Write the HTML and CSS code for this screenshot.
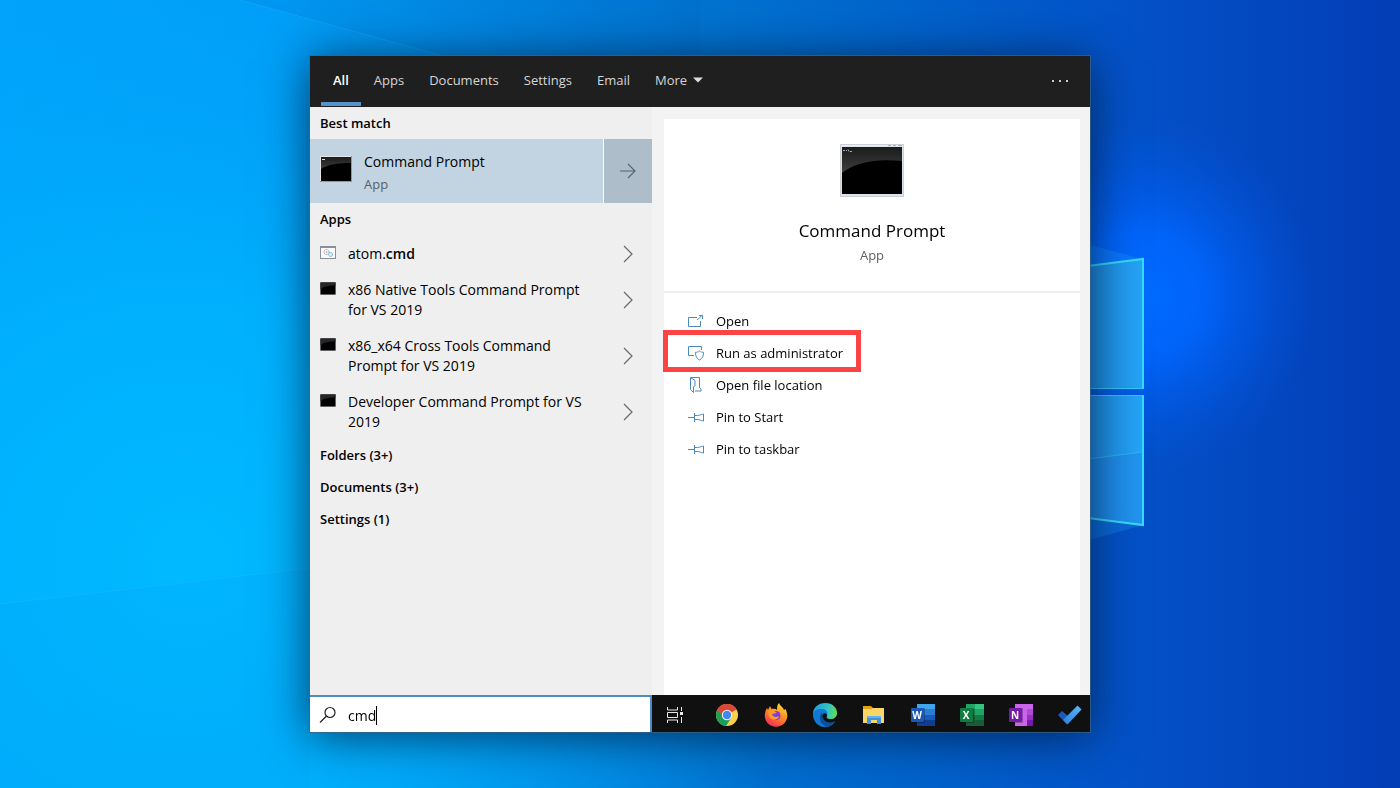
FILE: index.html
```
<!DOCTYPE html>
<html lang="en">
<head>
    <meta charset="UTF-8">
    <meta name="viewport" content="width=device-width, initial-scale=1.0">
    <title>Search</title>
    <link rel="stylesheet" href="styles.css">
</head>
<body>
    <!-- wallpaper -->
    <svg class="wallpaper" viewBox="0 0 1400 788" preserveAspectRatio="xMidYMid slice" aria-hidden="true">
        <defs>
            <linearGradient id="sky" x1="0" y1="0" x2="1" y2="0">
                <stop offset="0" stop-color="#00a4fb"/>
                <stop offset=".2" stop-color="#009df8"/>
                <stop offset=".5" stop-color="#0074d0"/>
                <stop offset=".8" stop-color="#0352c8"/>
                <stop offset="1" stop-color="#033db6"/>
            </linearGradient>
            <radialGradient id="cyan" gradientUnits="userSpaceOnUse" cx="190" cy="560" r="620">
                <stop offset="0" stop-color="#00baff"/>
                <stop offset=".4" stop-color="#00b4ff" stop-opacity=".85"/>
                <stop offset="1" stop-color="#00a4f8" stop-opacity="0"/>
            </radialGradient>
            <radialGradient id="glow" gradientUnits="userSpaceOnUse" cx="1140" cy="295" r="180">
                <stop offset="0" stop-color="#006cff"/>
                <stop offset=".35" stop-color="#0066ff" stop-opacity=".9"/>
                <stop offset="1" stop-color="#0054e0" stop-opacity="0"/>
            </radialGradient>
            <linearGradient id="pane" x1="0" y1="0" x2="1" y2="0">
                <stop offset="0" stop-color="#1c86dc"/>
                <stop offset="1" stop-color="#25a5f8"/>
            </linearGradient>
        </defs>
        <rect width="1400" height="788" fill="url(#sky)"/>
        <rect width="1400" height="788" fill="url(#cyan)"/>
        <rect width="1400" height="788" fill="url(#glow)"/>
        <path d="M240 0L440 55H700V0z" fill="#0060c0" opacity=".12"/>
        <path d="M0 604L310 568V788H0z" fill="#0090e8" opacity=".1"/>
        <path d="M240 0L440 55M0 604L310 568" stroke="#3cc0ff" stroke-opacity=".25" fill="none"/>
        <path d="M1090 245L1143 259L1090 266zM1090 519L1143 525L1090 540z" fill="#20a8ff" opacity=".25"/>
        <path d="M1080 267L1143 259V389H1080z" fill="url(#pane)"/>
        <path d="M1080 395H1143V525L1080 517z" fill="url(#pane)"/>
        <path d="M1080 460L1143 452V525L1080 517z" fill="#1a74e0" opacity=".3"/>
        <path d="M1080 460L1143 452" stroke="#30c8f0" stroke-opacity=".6"/>
        <path d="M1080 267L1143 259V389M1143 395V525L1080 517" fill="none" stroke="#34dcf8" stroke-width="2"/>
        <path d="M1080 388.500H1143M1080 395.500H1143" stroke="#30c8f5"/>
    </svg>

    <!-- shared icon shapes -->
    <svg class="sprite" aria-hidden="true">
        <defs>
            <linearGradient id="shine" x1="0" y1="0" x2="0" y2="1">
                <stop offset="0" stop-color="#1c1c1c"/>
                <stop offset="1" stop-color="#3e3e3e"/>
            </linearGradient>
            <symbol id="console" viewBox="0 0 16 13">
                <rect width="16" height="13" fill="#c3c7cc"/>
                <rect x=".5" y=".5" width="15" height="12" fill="#000"/>
                <path d="M.5 7.500C3 4.500 8 3.500 15.500 3.500V.5H.5z" fill="#262626"/>
            </symbol>
            <symbol id="chevron" viewBox="0 0 10 18">
                <path d="M1 1l8 8-8 8" fill="none" stroke="#6a6a6a" stroke-width="1.200"/>
            </symbol>
            <symbol id="pin" viewBox="0 0 16 16">
                <path d="M0 8.500h6.500M6.500 4v9M6.500 6.500h3c2 0 3-1 6-1.500v7c-3-.5-4-1.500-6-1.500h-3" fill="none" stroke="#4a8ac4"/>
            </symbol>
        </defs>
    </svg>

    <div class="window">
        <header class="tabs">
            <nav class="tab-list">
                <button class="tab active">All</button>
                <button class="tab">Apps</button>
                <button class="tab">Documents</button>
                <button class="tab">Settings</button>
                <button class="tab">Email</button>
                <button class="tab">More <svg width="10" height="6" viewBox="0 0 10 6"><path d="M0 .5h10L5 5.500z" fill="#ddd"/></svg></button>
            </nav>
            <button class="options" aria-label="Options">
                <svg width="16" height="4" viewBox="0 0 16 4" fill="#ccc"><rect x="0" y="0" width="2" height="2"/><rect x="7" y="0" width="2" height="2"/><rect x="14" y="0" width="2" height="2"/></svg>
            </button>
        </header>

        <main class="content">
            <section class="results">
                <h2 class="group">Best match</h2>
                <div class="best">
                    <button class="best-item">
                        <svg class="best-icon" width="32" height="26" viewBox="0 0 32 26">
                            <rect width="32" height="26" fill="#8f979f"/>
                            <rect width="31" height="25" fill="#e3e7ea"/>
                            <rect x="1" y="1" width="30" height="24" fill="#000"/>
                            <path d="M1 13C7 9 16 7 31 7V1H1z" fill="url(#shine)"/>
                            <path d="M2 3.500h3" stroke="#ddd"/>
                        </svg>
                        <span class="best-text">
                            <span class="best-name">Command Prompt</span>
                            <span class="kind">App</span>
                        </span>
                    </button>
                    <button class="best-open" aria-label="Show details">
                        <svg width="16" height="16" viewBox="0 0 16 16"><path d="M0 8h15M8 1l7 7-7 7" fill="none" stroke="#57636e" stroke-width="1.100"/></svg>
                    </button>
                </div>

                <h2 class="group">Apps</h2>
                <button class="result">
                    <svg class="result-icon" width="16" height="13" viewBox="0 0 16 13">
                        <rect x=".5" y=".5" width="15" height="12" fill="#fafafa" stroke="#8b9098"/>
                        <path d="M1 1.500h14" stroke="#8b9098"/>
                        <circle cx="6.500" cy="6" r="2.500" fill="none" stroke="#8f9499" stroke-dasharray="1.200 .6"/>
                        <circle cx="6.500" cy="6" r=".8" fill="#8f9499"/>
                        <circle cx="10.500" cy="8.500" r="2" fill="#d5edf8" stroke="#6bafd4" stroke-dasharray="1.200 .5"/>
                    </svg>
                    <span class="result-name">atom.<b>cmd</b></span>
                    <svg class="result-more" width="10" height="18"><use href="#chevron"/></svg>
                </button>
                <button class="result">
                    <svg class="result-icon" width="16" height="13"><use href="#console"/></svg>
                    <span class="result-name">x86 Native Tools Command Prompt for VS 2019</span>
                    <svg class="result-more" width="10" height="18"><use href="#chevron"/></svg>
                </button>
                <button class="result">
                    <svg class="result-icon" width="16" height="13"><use href="#console"/></svg>
                    <span class="result-name">x86_x64 Cross Tools Command Prompt for VS 2019</span>
                    <svg class="result-more" width="10" height="18"><use href="#chevron"/></svg>
                </button>
                <button class="result">
                    <svg class="result-icon" width="16" height="13"><use href="#console"/></svg>
                    <span class="result-name">Developer Command Prompt for VS 2019</span>
                    <svg class="result-more" width="10" height="18"><use href="#chevron"/></svg>
                </button>

                <h2 class="group">Folders (3+)</h2>
                <h2 class="group">Documents (3+)</h2>
                <h2 class="group">Settings (1)</h2>
            </section>

            <section class="preview">
                <div class="card">
                    <div class="card-head">
                        <svg width="64" height="54" viewBox="0 0 64 54">
                            <rect x=".5" y=".5" width="63" height="52" fill="#dde3ea" stroke="#ccd0d4"/>
                            <path d="M1 1.500h62" stroke="#eef1f4"/>
                            <path d="M48 1.500h3M53 1.500h3M58 1.500h4" stroke="#a9b2bd"/>
                            <rect x="2" y="3" width="60" height="47" fill="#000"/>
                            <path d="M2 29C14 19 34 14 62 17V3H2z" fill="url(#shine)"/>
                            <path d="M3 6.500h2M6 6.500h1M8 5.500l1 2M10 7.500h2" stroke="#aaa"/>
                        </svg>
                        <h1 class="card-title">Command Prompt</h1>
                        <span class="kind">App</span>
                    </div>
                    <div class="actions">
                        <button class="action">
                            <svg width="16" height="16" viewBox="0 0 16 16" fill="none" stroke="#4a8ac4"><path d="M9 4.500H.5v9h12V8M9 7l5.500-5M11 2.500h3.500V6"/></svg>
                            Open
                        </button>
                        <button class="action marked">
                            <svg width="16" height="16" viewBox="0 0 16 16" fill="none" stroke="#4a8ac4"><path d="M6 10.500H.5v-9h13V5M11.500 6c1.200 1 2.600 1.300 4 1.300 0 4-1 6.200-4 7.700-3-1.500-4-3.700-4-7.700 1.400 0 2.800-.3 4-1.300z"/></svg>
                            Run as administrator
                        </button>
                        <button class="action">
                            <svg width="16" height="16" viewBox="0 0 16 16" fill="none" stroke="#4a8ac4"><path d="M2.500.5v12l3 3V10L7 8.500V3.500l-4.500-3h9v10l1.500 1.500v2H7"/></svg>
                            Open file location
                        </button>
                        <button class="action">
                            <svg width="16" height="16"><use href="#pin"/></svg>
                            Pin to Start
                        </button>
                        <button class="action">
                            <svg width="16" height="16"><use href="#pin"/></svg>
                            Pin to taskbar
                        </button>
                    </div>
                </div>
            </section>
        </main>

        <footer class="bottom">
            <label class="search">
                <svg width="18" height="18" viewBox="0 0 18 18" fill="none" stroke="#222" stroke-width="1.200"><circle cx="11" cy="6.500" r="5"/><path d="M7.500 10L1 16.500"/></svg>
                <input class="search-input" type="text" value="cmd" aria-label="Search">
                <span class="caret"></span>
            </label>
            <div class="taskbar">
                <button class="task task-view" aria-label="Task View">
                    <svg width="24" height="24" viewBox="0 0 24 24" fill="none" stroke="#e8e8e8"><path d="M4.500 4v3h10V4M4.500 20v-3h10v3M4.500 9.500h10v5h-10zM18.500 4v4M18.500 14v6"/><rect x="17.500" y="9.500" width="2" height="2" fill="#fff"/></svg>
                </button>
                <button class="task" aria-label="Chrome">
                    <svg width="24" height="24" viewBox="0 0 24 24">
                        <circle cx="12" cy="12" r="11" fill="#fcd04b"/>
                        <path d="M12 12L2.500 6.500A11 11 0 0 1 21.500 6.500z" fill="#d9483b"/>
                        <path d="M2.500 6.500A11 11 0 0 0 11 23l5.500-8.500H12z" fill="#1b9e58"/>
                        <path d="M12 7h9.700A11 11 0 0 0 2.500 6.500L8 14z" fill="#d9483b"/>
                        <circle cx="12" cy="12" r="5.200" fill="#f4f4f4"/>
                        <circle cx="12" cy="12" r="4.200" fill="#4486f4"/>
                    </svg>
                </button>
                <button class="task" aria-label="Firefox">
                    <svg width="24" height="24" viewBox="0 0 24 24">
                        <defs><linearGradient id="fire" x1=".8" y1="0" x2=".3" y2="1"><stop offset="0" stop-color="#ffe03a"/><stop offset=".5" stop-color="#ff8a1e"/><stop offset="1" stop-color="#f5295c"/></linearGradient></defs>
                        <path d="M15 0c1 3 4 4 5 7l1.500-1C24 11 24 16 20.500 20 16 25 8 25 3.500 20 0 16 0 10 3 5l1 2 2-4 1.500 3C10 5.500 12 6 13 7c0-3 0-5 2-7z" fill="url(#fire)"/>
                        <circle cx="12" cy="12.500" r="4.500" fill="#7a3fe0"/>
                        <path d="M4 8c3-1 6-1 9 2-2 0-3 1-5 1 1 3 4 4 7 2-1 5-8 5-10 0z" fill="#ff9a22"/>
                    </svg>
                </button>
                <button class="task" aria-label="Edge">
                    <svg width="24" height="24" viewBox="0 0 24 24">
                        <defs><linearGradient id="edge" x1="0" y1=".4" x2="1" y2=".5"><stop offset="0" stop-color="#1f9be0"/><stop offset=".6" stop-color="#30c3c8"/><stop offset="1" stop-color="#62dc50"/></linearGradient></defs>
                        <path d="M0 11C0 4 6 0 12 0c8 0 12 5 12 10 0 4-3 6-6 6-4 0-5-1-4-3 1-3-2-5-5-5C4 8 1 10 0 13z" fill="url(#edge)"/>
                        <path d="M0 12c0-4 4-6 8-6 5 0 7 3 6 6-1-2-3-2-4-1-3 4 1 9 6 9 3 0 5-1 6-2-2 4-6 6-10 6C5 24 0 18 0 12z" fill="#1279d0"/>
                        <path d="M9 9c-4 5-2 13 5 15 4-.5 7-3 8-6-6 4-14 0-13-9z" fill="#0c4f9e"/>
                    </svg>
                </button>
                <button class="task" aria-label="File Explorer">
                    <svg width="24" height="24" viewBox="0 0 24 24">
                        <path d="M1 3h8l2 2v4H1z" fill="#e3a010"/>
                        <path d="M1 6h8l2-1h11v15H1z" fill="#fbd568"/>
                        <path d="M5 21v-8h14v8h-4v-4H9v4z" fill="#3f94dc"/>
                        <path d="M5 13h14v2H5z" fill="#62b4ee"/>
                    </svg>
                </button>
                <button class="task" aria-label="Word">
                    <svg width="26" height="24" viewBox="0 0 26 24">
                        <path d="M7 1h18v6H7z" fill="#41a5ee"/><path d="M7 6h18v6H7z" fill="#2b7cd3"/><path d="M7 12h18v5H7z" fill="#185abd"/><path d="M7 17h18v6H7z" fill="#103f91"/>
                        <path d="M7 5h8v15H7z" fill="#000" opacity=".25"/>
                        <rect x="1" y="5" width="13" height="14" rx="1" fill="#1a58b8"/>
                        <text class="letter" x="7" y="16">W</text>
                    </svg>
                </button>
                <button class="task" aria-label="Excel">
                    <svg width="26" height="24" viewBox="0 0 26 24">
                        <path d="M7 1h9v6H7z" fill="#21a366"/><path d="M16 1h9v6h-9z" fill="#33c481"/><path d="M7 6h9v6H7z" fill="#107c41"/><path d="M16 6h9v6h-9z" fill="#21a366"/><path d="M7 12h9v5H7z" fill="#185c37"/><path d="M16 12h9v5h-9z" fill="#107c41"/><path d="M7 17h18v6H7z" fill="#185c37"/>
                        <path d="M7 5h8v15H7z" fill="#000" opacity=".25"/>
                        <rect x="1" y="5" width="13" height="14" rx="1" fill="#107c41"/>
                        <text class="letter" x="7" y="16">X</text>
                    </svg>
                </button>
                <button class="task" aria-label="OneNote">
                    <svg width="26" height="24" viewBox="0 0 26 24">
                        <path d="M7 1h18v22H7z" fill="#ca64ea"/><path d="M19 6h6v6h-6z" fill="#ae4bd5"/><path d="M19 12h6v5h-6z" fill="#9332bf"/><path d="M19 17h6v6h-6z" fill="#7719aa"/>
                        <path d="M7 5h8v15H7z" fill="#000" opacity=".25"/>
                        <rect x="1" y="5" width="13" height="14" rx="1" fill="#7719aa"/>
                        <text class="letter" x="7" y="16">N</text>
                    </svg>
                </button>
                <button class="task" aria-label="To Do">
                    <svg width="24" height="24" viewBox="0 0 24 24">
                        <defs><linearGradient id="tick" x1="0" y1="1" x2="1" y2="0"><stop offset="0" stop-color="#2b7fe0"/><stop offset="1" stop-color="#5bb8fa"/></linearGradient></defs>
                        <path d="M0 12l4-4 6 5-1 8.500z" fill="#195bbd"/>
                        <path d="M5 17L19.500 2.500l4 4L9.500 21.500z" fill="url(#tick)"/>
                    </svg>
                </button>
            </div>
        </footer>
    </div>
</body>
</html>
```
FILE: styles.css
```
*,
*::after {
    box-sizing: border-box;
}

body {
    margin: 0;
    min-height: 100vh;
    display: flex;
    justify-content: center;
    align-items: center;
    background: #0078d6;
    color: #000;
    font-family: "Open Sans", "Noto Sans", sans-serif;
    font-size: 14px;
}

button {
    margin: 0;
    padding: 0;
    border: none;
    background: none;
    color: inherit;
    font: inherit;
    text-align: left;
    cursor: pointer;
}

svg {
    display: block;
    flex-shrink: 0;
}

.wallpaper {
    position: fixed;
    inset: 0;
    width: 100%;
    height: 100%;
    z-index: -1;
}

.sprite {
    position: absolute;
    width: 0;
    height: 0;
}

.window {
    display: flex;
    flex-direction: column;
    width: 90%;
    max-width: 780px;
    min-height: calc(100vh - 112px);
    box-shadow: 0 0 0 1px rgba(60, 100, 130, 0.7), 0 4px 44px rgba(0, 20, 50, 0.75);
}

/* tabs */
.tabs {
    display: flex;
    justify-content: space-between;
    height: 51px;
    padding: 0 22px 0 11px;
    background: #1f1f1f;
    color: #d6d6d6;
    font-size: 13px;
}

.tab-list {
    display: flex;
    gap: 1px;
}

.tab {
    display: flex;
    align-items: center;
    gap: 6px;
    padding: 2px 12px 0;
    border-bottom: 4px solid transparent;
    margin-bottom: 1px;
}

.tab.active {
    border-bottom-color: #5593cb;
    color: #fff;
    font-weight: 600;
}

/* results */
.content {
    display: flex;
    flex: 1;
}

.results {
    display: flex;
    flex-direction: column;
    width: 342px;
    background: #efefef;
}

.group {
    margin: 0;
    padding-left: 10px;
    font-size: 13px;
    font-weight: 600;
    line-height: 32px;
}

.best {
    display: flex;
    gap: 1px;
    height: 64px;
    background: #fff;
}

.best-item {
    display: flex;
    flex: 1;
    align-items: center;
    gap: 12px;
    padding-left: 10px;
    background: #c2d3e2;
}

.best-icon {
    margin-bottom: 4px;
}

.best-text {
    display: flex;
    flex-direction: column;
    gap: 2px;
    padding-top: 3px;
}

.best-name {
    line-height: 20px;
}

.kind {
    color: #5c5f63;
    font-size: 13px;
    line-height: 20px;
}

.best-open {
    display: flex;
    justify-content: center;
    align-items: center;
    width: 48px;
    background: #adbdca;
}

.result {
    display: flex;
    align-items: flex-start;
    gap: 12px;
    padding: 9px 19px 7px 10px;
    line-height: 20px;
}

.result-icon {
    margin-top: 2px;
}

.result-name {
    flex: 1;
    padding-right: 20px;
}

.result-name b {
    font-weight: 600;
}

.result-more {
    align-self: center;
}

/* preview */
.preview {
    display: flex;
    flex: 1;
    padding: 12px 10px 0 12px;
    background: #f3f3f3;
}

.card {
    flex: 1;
    background: #fff;
}

.card-head {
    display: flex;
    flex-direction: column;
    align-items: center;
    padding: 25px 0 26px;
    border-bottom: 2px solid #f0f0f0;
}

.card-title {
    margin: 21px 0 2px;
    font-size: 17px;
    font-weight: 400;
    line-height: 24px;
}

.actions {
    display: flex;
    flex-direction: column;
    padding-top: 12px;
}

.action {
    position: relative;
    display: flex;
    align-items: center;
    gap: 12px;
    height: 32px;
    padding-left: 24px;
    font-size: 13px;
}

.marked::after {
    content: "";
    position: absolute;
    top: -7px;
    bottom: -3px;
    left: -1px;
    width: 198px;
    border: 5px solid #fd4444;
}

/* search box and taskbar */
.bottom {
    display: flex;
    height: 37px;
}

.search {
    display: flex;
    align-items: center;
    width: 342px;
    padding: 1px 0 0 9px;
    border-top: 2px solid #4a8cc6;
    border-right: 2px solid #4a8cc6;
    background: #fff;
    cursor: text;
}

.search-input {
    field-sizing: content;
    margin-left: 11px;
    padding: 0;
    border: none;
    outline: none;
    background: none;
    font: inherit;
}

.caret {
    width: 1px;
    height: 19px;
    background: #000;
}

.taskbar {
    display: flex;
    flex: 1;
    align-items: center;
    gap: 25px;
    padding-left: 11px;
    background: #101010;
}

.task {
    display: flex;
    justify-content: center;
    width: 24px;
    margin-top: 2px;
}

.task-view {
    margin-right: 3px;
}

.letter {
    fill: #fff;
    font-family: "Open Sans", sans-serif;
    font-size: 10px;
    font-weight: 700;
    text-anchor: middle;
}
```
